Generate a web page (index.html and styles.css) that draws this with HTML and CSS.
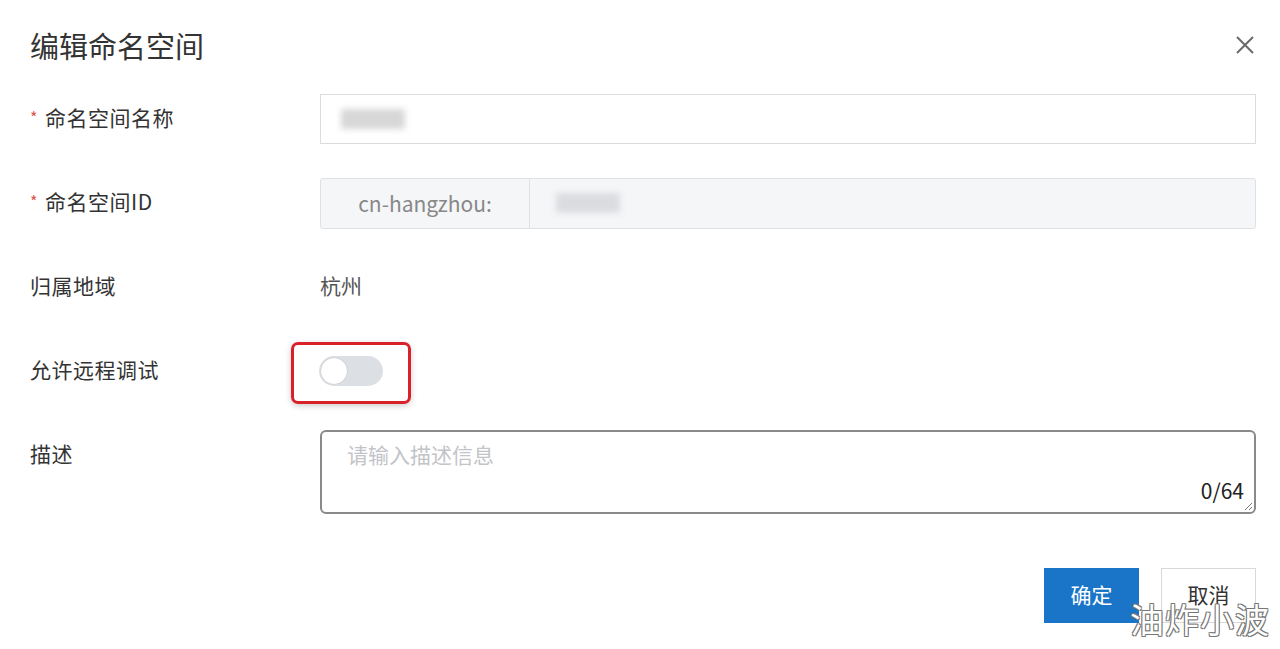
FILE: index.html
```html
<!DOCTYPE html>
<html lang="zh-CN">

<head>
  <meta charset="UTF-8">
  <meta name="viewport" content="width=device-width, initial-scale=1.0">
  <title>编辑命名空间</title>
  <link rel="stylesheet" href="styles.css">
</head>

<body>
  <div class="dialog">
    <div class="header">
      <div class="title">编辑命名空间</div>
      <span class="close">
        <svg width="20" height="20" viewBox="0 0 20 20">
          <path d="M2 2 L18 18 M18 2 L2 18" stroke="#6b6b6b" stroke-width="2" fill="none" />
        </svg>
      </span>
    </div>

    <div class="form">
      <div class="row">
        <div class="label"><span class="req">*</span>命名空间名称</div>
        <div class="field">
          <div class="input"><span class="blur blur_name"></span></div>
        </div>
      </div>

      <div class="row">
        <div class="label"><span class="req">*</span>命名空间ID</div>
        <div class="field">
          <div class="input group">
            <span class="addon">cn-hangzhou:</span>
            <span class="group_val"><span class="blur blur_id"></span></span>
          </div>
        </div>
      </div>

      <div class="row">
        <div class="label">归属地域</div>
        <div class="field text_val">杭州</div>
      </div>

      <div class="row">
        <div class="label">允许远程调试</div>
        <div class="field">
          <span class="mark">
            <span class="switch"><span class="knob"></span></span>
          </span>
        </div>
      </div>

      <div class="row row_top">
        <div class="label">描述</div>
        <div class="field">
          <div class="textarea">
            <span class="placeholder">请输入描述信息</span>
            <span class="count">0/64</span>
            <svg class="resize" width="10" height="10" viewBox="0 0 10 10">
              <path d="M9 2 L2 9 M9 6 L6 9" stroke="#777" stroke-width="1" fill="none" />
            </svg>
          </div>
        </div>
      </div>
    </div>

    <div class="footer">
      <span class="btn btn_ok">确定</span>
      <span class="btn btn_cancel">取消</span>
    </div>
    <div class="watermark">油炸小波</div>
  </div>
</body>

</html>
```

FILE: styles.css
```css
body {
  margin: 0;
  background: #fff;
  font-family: "Noto Sans CJK SC", "Noto Sans", sans-serif;
  color: #333;
}

.dialog {
  width: 1280px;
  height: 649px;
  padding: 0 24px 0 30px;
  box-sizing: border-box;
  position: relative;
  overflow: hidden;
}

.header {
  height: 90px;
  display: flex;
  align-items: center;
  justify-content: space-between;
}

.title {
  font-size: 29px;
  color: #333;
}

.close {
  display: flex;
  margin-right: 1px;
}

.form {
  padding-top: 4px;
}

.row {
  display: flex;
  align-items: center;
  height: 50px;
  margin-bottom: 34px;
}

.row_top {
  align-items: flex-start;
  height: auto;
}

.label {
  width: 290px;
  flex-shrink: 0;
  font-size: 21px;
  letter-spacing: 0.5px;
  line-height: 46px;
  padding-bottom: 4px;
  color: #333;
}

.req {
  color: #d9534f;
  font-size: 16px;
  margin-right: 7px;
  vertical-align: 2px;
}

.field {
  flex: 1;
}

.input {
  height: 50px;
  border: 1px solid #dcdcdc;
  box-sizing: border-box;
  display: flex;
  align-items: center;
  padding-left: 20px;
}

.group {
  padding-left: 0;
  border-radius: 3px;
  background: #f5f6f8;
  border-color: #dfe1e5;
  height: 51px;
}

.addon {
  width: 208px;
  height: 100%;
  display: flex;
  align-items: center;
  justify-content: center;
  border-right: 1px solid #dfe1e5;
  font-size: 21px;
  color: #888;
}

.group_val {
  padding-left: 26px;
  display: flex;
  align-items: center;
}

.blur {
  display: inline-block;
  background: #d7d7d7;
  filter: blur(3px);
}

.blur_name {
  width: 64px;
  height: 20px;
}

.blur_id {
  width: 64px;
  height: 20px;
  background: #dadcdf;
}

.text_val {
  font-size: 21px;
  color: #555;
  padding-bottom: 4px;
}

.mark {
  display: inline-flex;
  align-items: center;
  padding: 11px 25px 15px 25px;
  margin: -4px 0 -8px -29px;
  border: 3px solid #d82129;
  border-radius: 7px;
  box-shadow: 0 2px 6px rgba(0, 0, 0, 0.2);
}

.switch {
  width: 64px;
  height: 30px;
  border-radius: 15px;
  background: #dcdfe4;
  position: relative;
}

.knob {
  position: absolute;
  left: 2px;
  top: 2px;
  width: 26px;
  height: 26px;
  border-radius: 50%;
  background: #fff;
  box-shadow: 0 0 1px rgba(0, 0, 0, 0.3);
}

.textarea {
  height: 84px;
  border: 2px solid #8a8a8a;
  border-radius: 6px;
  box-sizing: border-box;
  position: relative;
}

.placeholder {
  position: absolute;
  left: 25px;
  top: 7px;
  font-size: 21px;
  color: #c2c4c8;
}

.count {
  position: absolute;
  right: 10px;
  bottom: 7px;
  font-size: 21px;
  color: #222;
}

.resize {
  position: absolute;
  right: 1px;
  bottom: 1px;
}

.footer {
  display: flex;
  justify-content: flex-end;
  gap: 22px;
  margin-top: 54px;
}

.btn {
  width: 95px;
  height: 55px;
  box-sizing: border-box;
  display: flex;
  align-items: center;
  justify-content: center;
  font-size: 21px;
  padding-bottom: 3px;
}

.btn_ok {
  background: #1a75c9;
  color: #fff;
}

.btn_cancel {
  border: 1px solid #d8d8d8;
  color: #333;
}

.watermark {
  position: absolute;
  right: 10px;
  bottom: 6px;
  font-size: 34px;
  color: #fff;
  letter-spacing: 1px;
  text-shadow: -1px -1px 0 #777, 1px -1px 0 #777, -1px 1px 0 #777, 1px 1px 0 #777;
}
```
